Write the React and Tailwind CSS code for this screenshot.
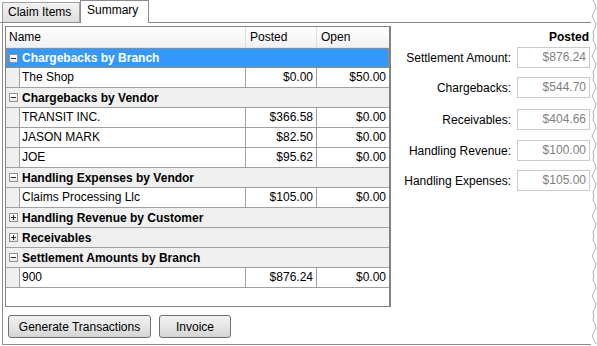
import React from 'react';

const rows = [
  { type: 'group', label: 'Chargebacks by Branch', expanded: true, selected: true },
  { type: 'item', name: 'The Shop', posted: '$0.00', open: '$50.00' },
  { type: 'group', label: 'Chargebacks by Vendor', expanded: true },
  { type: 'item', name: 'TRANSIT INC.', posted: '$366.58', open: '$0.00' },
  { type: 'item', name: 'JASON MARK', posted: '$82.50', open: '$0.00' },
  { type: 'item', name: 'JOE', posted: '$95.62', open: '$0.00' },
  { type: 'group', label: 'Handling Expenses by Vendor', expanded: true },
  { type: 'item', name: 'Claims Processing Llc', posted: '$105.00', open: '$0.00' },
  { type: 'group', label: 'Handling Revenue by Customer', expanded: false },
  { type: 'group', label: 'Receivables', expanded: false },
  { type: 'group', label: 'Settlement Amounts by Branch', expanded: true },
  { type: 'item', name: '900', posted: '$876.24', open: '$0.00' },
];

const totals = [
  { label: 'Settlement Amount:', value: '$876.24', gap: 'mt-[3px]' },
  { label: 'Chargebacks:', value: '$544.70', gap: 'mt-[9px]' },
  { label: 'Receivables:', value: '$404.66', gap: 'mt-[11px]' },
  { label: 'Handling Revenue:', value: '$100.00', gap: 'mt-[10px]' },
  { label: 'Handling Expenses:', value: '$105.00', gap: 'mt-[9px]' },
];

// torn screenshot edge
const tear = [];
for (let y = 0, i = 0; y <= 346; y += 4, i++) {
  const xs = [2, 4, 5, 3, 1, 3, 5, 4, 2, 3];
  tear.push(`${xs[i % xs.length]},${y}`);
}

const Expander = ({ expanded }) => (
  <span className="relative inline-block w-[9px] h-[9px] border border-[#919191] bg-gradient-to-b from-white to-[#e6e6e6] shrink-0">
    <span className="absolute left-[1px] top-[3px] w-[5px] h-[1px] bg-[#2b2b2b]" />
    {!expanded && <span className="absolute left-[3px] top-[1px] w-[1px] h-[5px] bg-[#2b2b2b]" />}
  </span>
);

const GroupRow = ({ row }) => (
  <div
    className={
      row.selected
        ? 'flex items-center h-[20px] bg-[#3399ff] text-white border border-dotted border-[#e8801f] pl-[2px]'
        : 'flex items-center h-[20px] bg-[#f0f0f0] border-b border-[#a0a0a0] pl-[3px]'
    }
  >
    <Expander expanded={row.expanded} />
    <span className="ml-[4px] font-bold">{row.label}</span>
  </div>
);

const ItemRow = ({ row }) => (
  <div className="flex h-[20px] border-b border-[#a0a0a0]">
    <div className="w-[13px] bg-[#f0f0f0] shrink-0" />
    <div className="w-[226px] bg-white border-l border-[#a0a0a0] pl-[2px] leading-[19px]">{row.name}</div>
    <div className="w-[71px] bg-white border-l border-[#a0a0a0] pr-[3px] text-right leading-[19px]">{row.posted}</div>
    <div className="flex-1 bg-white border-l border-[#a0a0a0] pr-[3px] text-right leading-[19px]">{row.open}</div>
  </div>
);

const Button = ({ children, width }) => (
  <button className={`${width} h-[23px] border border-[#707070] rounded-[3px] bg-gradient-to-b from-[#f2f2f2] via-[#e6e6e6] to-[#d4d4d4] text-[12px] text-black`}>
    {children}
  </button>
);

export default function App() {
  return (
    <div className="w-[597px] h-[346px] flex bg-white text-[12px] text-black overflow-hidden" style={{ fontFamily: '"Liberation Sans", Arial, sans-serif' }}>
      <div className="w-[591px] h-[345px] flex flex-col">
        <div className="h-[23px] flex items-end shrink-0">
          <div className="w-[2px] h-[1px] bg-[#898c95]" />
          <div className="w-[78px] h-[21px] border border-[#a0a0a0] border-b-[#898c95] bg-gradient-to-b from-[#f3f3f3] to-[#dedede] pl-[5px] leading-[19px]">
            Claim Items
          </div>
          <div className="w-[69px] h-[23px] border border-b-0 border-[#898c95] bg-white pl-[6px] leading-[19px]">
            Summary
          </div>
          <div className="flex-1 h-[1px] bg-[#898c95]" />
        </div>

        <div className="flex-1 ml-[2px] border-l border-b border-[#898c95] flex">
          <div className="w-[388px] pl-[2px] pt-[3px] flex flex-col">
            <div className="w-[386px] h-[281px] border border-r-2 border-[#828282] bg-white flex flex-col">
              <div className="flex h-[21px] border-b border-[#e3e3e3] bg-gradient-to-b from-white to-[#f1f2f4]">
                <div className="w-[240px] pl-[3px] leading-[20px] border-r border-[#e0e0e0]">Name</div>
                <div className="w-[71px] pl-[4px] leading-[20px] border-r border-[#e0e0e0]">Posted</div>
                <div className="flex-1 pl-[4px] leading-[20px]">Open</div>
              </div>
              {rows.map((row, i) =>
                row.type === 'group' ? <GroupRow key={i} row={row} /> : <ItemRow key={i} row={row} />
              )}
            </div>
            <div className="flex gap-[8px] ml-[3px] mt-[8px]">
              <Button width="w-[143px]">Generate Transactions</Button>
              <Button width="w-[72px]">Invoice</Button>
            </div>
          </div>

          <div className="flex-1 flex flex-col items-end pr-[1px] pt-[7px]">
            <div className="font-bold leading-[14px] pr-[1px]">Posted</div>
            {totals.map((t) => (
              <div key={t.label} className={`flex items-center gap-[6px] ${t.gap}`}>
                <span>{t.label}</span>
                <div className="w-[73px] h-[21px] border border-[#cbcbcb] text-right pr-[3px] leading-[19px] text-[#7f7f7f]">
                  {t.value}
                </div>
              </div>
            ))}
          </div>
        </div>
      </div>
      <svg width="6" height="346" className="shrink-0">
        <polyline points={tear.join(' ')} fill="none" stroke="#b4b4b4" strokeWidth="1" />
      </svg>
    </div>
  );
}
